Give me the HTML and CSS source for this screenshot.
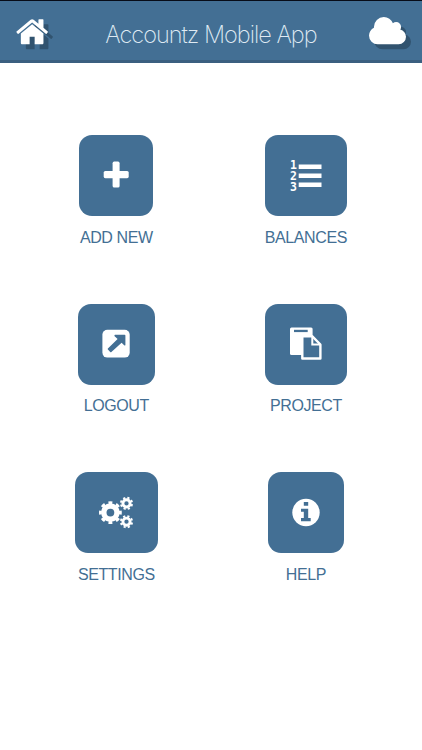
FILE: index.html
```
<!DOCTYPE html>
<html lang="en">

<head>
    <meta charset="UTF-8">
    <meta name="viewport" content="width=device-width, initial-scale=1.0">
    <title>Accountz Mobile App</title>
    <link rel="stylesheet" href="styles.css">
</head>

<body>
    <header class="header">
        <svg class="home" viewBox="60 253 1580 1283">
            <path d="M1408 992v480q0 26-19 45t-45 19h-384v-384h-256v384h-384q-26 0-45-19t-19-45v-480q0-1 .5-3t.5-3l575-474 575 474q1 2 1 6zm223-69l-62 74q-8 9-21 11h-3q-13 0-21-7l-692-577-692 577q-12 8-24 7-13-2-21-11l-62-74q-8-10-7-23.5t11-21.5l719-599q32-26 76-26t76 26l244 204v-195q0-14 9-23t23-9h192q14 0 23 9t9 23v408l219 182q10 8 11 21.5t-7 23.5z"/>
        </svg>
        <h1 class="title">Accountz Mobile App</h1>
        <svg class="cloud" viewBox="64 128 1920 1408">
            <path d="M1984 1152q0 159-112.5 271.5t-271.5 112.5h-1088q-185 0-316.5-131.5t-131.5-316.5q0-132 71-241.5t187-163.5q-2-28-2-43 0-212 150-362t362-150q158 0 286.5 88t187.5 230q70-62 166-62 106 0 181 75t75 181q0 75-41 138 129 30 213 134.5t84 239.5z"/>
        </svg>
    </header>

    <main class="menu">
        <a class="item">
            <span class="tile small">
                <svg class="icon" viewBox="0 0 40 40">
                    <rect x="16.6" y="5.6" width="7" height="26" rx="1.6"/>
                    <rect x="7.7" y="15" width="25" height="7.2" rx="1.6"/>
                </svg>
            </span>
            <span class="label">ADD NEW</span>
        </a>
        <a class="item">
            <span class="tile large">
                <svg class="icon" viewBox="0 0 40 40">
                    <text class="digit" x="4" y="13.2">1</text>
                    <text class="digit" x="4" y="24.3">2</text>
                    <text class="digit" x="4" y="35.4">3</text>
                    <path d="M12.7 8.6h22.8v4.5H12.7zM12.7 17.6h22.8v4.5H12.7zM12.7 26.6h22.8v4.5H12.7z"/>
                </svg>
            </span>
            <span class="label">BALANCES</span>
        </a>
        <a class="item">
            <span class="tile medium">
                <svg class="icon" viewBox="0 0 40 40">
                    <rect x="6.4" y="5.8" width="27.3" height="27.8" rx="5"/>
                    <path class="cut" d="M19 10.8h9.6q.8 0 .8.8v9.3q-.3 1-1.2.4l-2.6-2.5L15.4 28q-.6.5-1.2 0l-2.3-2.4q-.5-.6 0-1.2L21.6 15l-3-2.8q-.6-1 .4-1.4z"/>
                </svg>
            </span>
            <span class="label">LOGOUT</span>
        </a>
        <a class="item">
            <span class="tile large">
                <svg class="icon" viewBox="0 0 40 40">
                    <rect x="4" y="3.6" width="22.6" height="27.3" rx="1.5"/>
                    <path class="cut" d="M8 5.8h13.7v2.3H8z"/>
                    <path class="page" d="M16.3 12.2h9.8l8.3 8.3v14H16.3z"/>
                    <path class="fold" d="M26.3 12.2v8.4h8.1"/>
                </svg>
            </span>
            <span class="label">PROJECT</span>
        </a>
        <a class="item">
            <span class="tile xlarge">
                <svg class="icon gears" viewBox="0 0 40 40">
                    <circle cx="14.4" cy="19.6" r="6.6" stroke-width="5.4"/>
                    <circle cx="14.4" cy="19.6" r="10" stroke-width="2.8" pathLength="16" stroke-dasharray="1 1" stroke-dashoffset=".5"/>
                    <circle cx="30.5" cy="10.4" r="3.6" stroke-width="2.9"/>
                    <circle cx="30.5" cy="10.4" r="5.6" stroke-width="2" pathLength="16" stroke-dasharray="1 1" stroke-dashoffset="-.4"/>
                    <circle cx="30.5" cy="28.7" r="3.6" stroke-width="2.9"/>
                    <circle cx="30.5" cy="28.7" r="5.6" stroke-width="2" pathLength="16" stroke-dasharray="1 1" stroke-dashoffset="-.4"/>
                </svg>
            </span>
            <span class="label">SETTINGS</span>
        </a>
        <a class="item">
            <span class="tile medium">
                <svg class="icon" viewBox="0 0 40 40">
                    <circle cx="20" cy="19.5" r="13.7"/>
                    <path class="cut" d="M17.8 8.9h4.4v3.8h-4.4zM15 15.7h7.2V25h2.5v3.2H15V25h2.8v-6.2H15z"/>
                </svg>
            </span>
            <span class="label">HELP</span>
        </a>
    </main>
</body>

</html>
```
FILE: styles.css
```
* {
    margin: 0;
    padding: 0;
    box-sizing: border-box;
}

body {
    background-color: #fff;
    font-family: "Liberation Sans", Arial, sans-serif;
}

.header {
    display: flex;
    justify-content: space-between;
    height: 62.6px;
    padding: 0 16px 0 17px;
    background-color: #436f94;
    border-top: 1px solid #070c18;
    border-bottom: 3.6px solid #3b5f80;
}

.home,
.cloud {
    fill: #fff;
    overflow: visible;
    filter: drop-shadow(5px 5px 0 #31536f);
}

.home {
    width: 31px;
    height: 25.5px;
    margin-top: 18.3px;
}

.cloud {
    width: 37px;
    height: 27.3px;
    margin-top: 16.2px;
}

.title {
    margin-left: 5px;
    color: #dfeaf3;
    font-family: Inter, "Liberation Sans", sans-serif;
    font-size: 23.5px;
    font-weight: 200;
    line-height: 68px;
    letter-spacing: -1px;
    white-space: nowrap;
}

.menu {
    display: grid;
    grid-template-columns: 189.6px 189.6px;
    grid-auto-rows: 168.6px;
    padding: 72.6px 0 0 21.5px;
}

.item {
    display: flex;
    flex-direction: column;
    align-items: center;
    color: #436f94;
}

.tile {
    display: flex;
    align-items: center;
    justify-content: center;
    height: 81px;
    border-radius: 13px;
    background-color: #436f94;
}

.small {
    width: 74px;
}

.medium {
    width: 76.6px;
}

.large {
    width: 82px;
}

.xlarge {
    width: 83.2px;
}

.label {
    margin-top: 12.6px;
    font-size: 16px;
    line-height: 18px;
    letter-spacing: -0.4px;
}

.icon {
    width: 40px;
    height: 40px;
    fill: #fff;
}

.digit {
    font: bold 11.5px "DejaVu Sans Mono", monospace;
}

.cut {
    fill: #436f94;
}

.page {
    fill: #436f94;
    stroke: #fff;
    stroke-width: 2.4;
    stroke-linejoin: round;
}

.fold {
    fill: none;
    stroke: #fff;
    stroke-width: 2;
}

.gears circle {
    fill: none;
    stroke: #fff;
}
```
